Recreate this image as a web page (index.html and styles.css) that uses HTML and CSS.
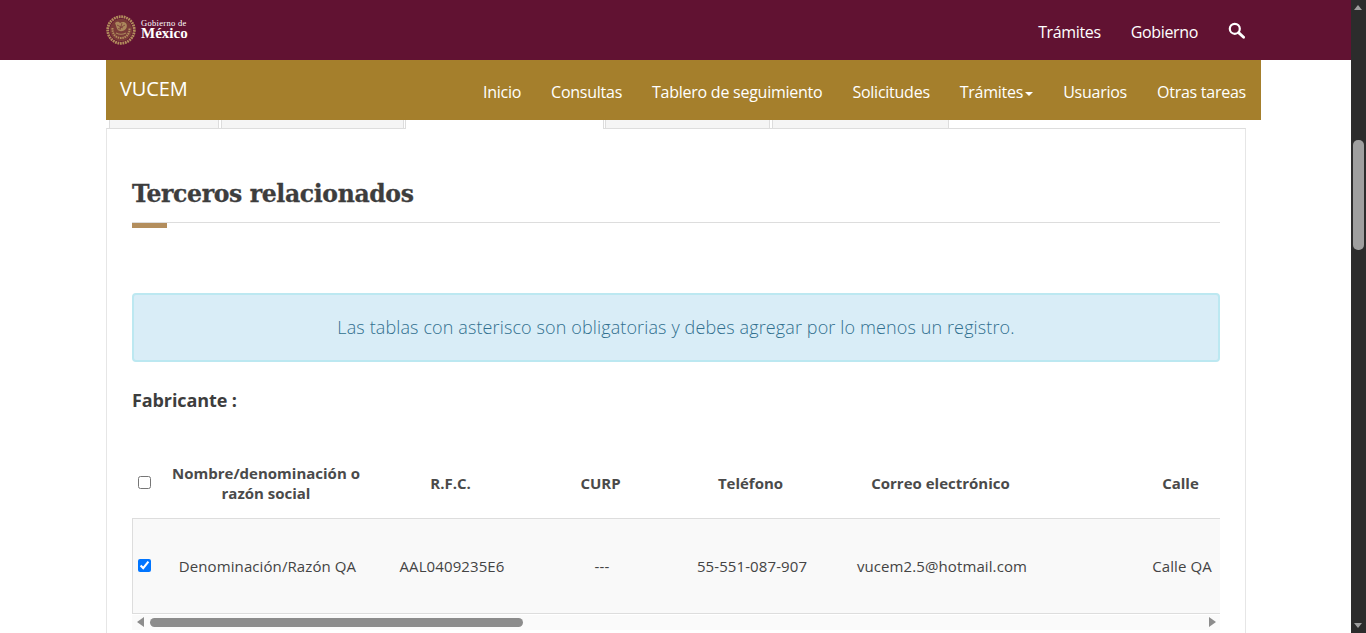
FILE: index.html
```html
<!DOCTYPE html>
<html lang="es">
<head>
    <meta charset="UTF-8">
    <meta name="viewport" content="width=device-width, initial-scale=1.0">
    <title>VUCEM - Terceros relacionados</title>
    <link rel="stylesheet" href="styles.css">
</head>
<body>
    <div class="page">
        <header class="gob-bar">
            <div class="container gob-inner">
                <a class="gob-logo" href="#">
                    <svg class="gob-emblem" width="30" height="30" viewBox="0 0 30 30">
                        <circle cx="15" cy="15" r="13.300" fill="none" stroke="#b38e5d" stroke-width="2.800" stroke-dasharray="1.800 .7"/>
                        <circle cx="15" cy="15" r="11.300" fill="#7a3a38"/>
                        <path d="M6.500 13c-.5 6 3.500 10 8.500 10s9-4 8.500-10" fill="none" stroke="#b38e5d" stroke-width="2" stroke-dasharray="1.500 .8"/>
                        <path d="M9 8c2-2 4-1.500 5 0 2-1.500 5-1.500 6.500 1 1 2.500 0 5-2.500 6.500-2.500 1-5 1-6.500-1-1-1.500-1-3-2.500-6.500z" fill="#ab875c"/>
                        <path d="M11 10l6 3M16 8l-2 7M12 14l7-4" stroke="#7a3a38" stroke-width=".8"/>
                        <path d="M10 18c3 1.500 7 1.500 10 0" fill="none" stroke="#ab875c" stroke-width="1.200"/>
                    </svg>
                    <span class="gob-name">
                        <span class="gob-small">Gobierno de</span>
                        <span class="gob-big">México</span>
                    </span>
                </a>
                <nav class="gob-links">
                    <a href="#">Trámites</a>
                    <a href="#">Gobierno</a>
                    <a href="#" class="gob-search">
                        <svg width="17" height="17" viewBox="0 0 17 17">
                            <circle cx="6.800" cy="6.800" r="5" fill="none" stroke="#fff" stroke-width="2.200"/>
                            <path d="M10.600 10.600l5 4.600" stroke="#fff" stroke-width="2.800" stroke-linecap="round"/>
                        </svg>
                    </a>
                </nav>
            </div>
        </header>

        <div class="container">
            <nav class="sub-nav">
                <a class="brand" href="#">VUCEM</a>
                <div class="sub-links">
                    <a href="#">Inicio</a>
                    <a href="#">Consultas</a>
                    <a href="#">Tablero de seguimiento</a>
                    <a href="#">Solicitudes</a>
                    <a href="#">Trámites<span class="caret"></span></a>
                    <a href="#">Usuarios</a>
                    <a href="#">Otras tareas</a>
                </div>
            </nav>

            <div class="tabs">
                <div class="tab tab-1"></div>
                <div class="tab tab-2"></div>
                <div class="tab tab-active"></div>
                <div class="tab tab-4"></div>
                <div class="tab tab-5"></div>
            </div>

            <section class="panel">
                <h2 class="title">Terceros relacionados</h2>
                <div class="title-rule"></div>

                <div class="alert">Las tablas con asterisco son obligatorias y debes agregar por lo menos un registro.</div>

                <h4 class="section-label">Fabricante :</h4>

                <div class="table-wrap">
                    <table class="data-table">
                        <thead>
                            <tr>
                                <th class="col-check"><input type="checkbox"></th>
                                <th class="col-name">Nombre/denominación o razón social</th>
                                <th class="col-std">R.F.C.</th>
                                <th class="col-std">CURP</th>
                                <th class="col-std">Teléfono</th>
                                <th class="col-mail">Correo electrónico</th>
                                <th class="col-street">Calle</th>
                            </tr>
                        </thead>
                        <tbody>
                            <tr>
                                <td class="col-check"><input type="checkbox" checked></td>
                                <td>Denominación/Razón QA</td>
                                <td>AAL0409235E6</td>
                                <td>---</td>
                                <td>55-551-087-907</td>
                                <td>vucem2.5@hotmail.com</td>
                                <td>Calle QA</td>
                            </tr>
                        </tbody>
                    </table>
                </div>
                <div class="h-scroll">
                    <span class="arrow-left"></span>
                    <span class="h-thumb"></span>
                    <span class="arrow-right"></span>
                </div>
            </section>
        </div>
    </div>

    <div class="v-scroll">
        <span class="arrow-up"></span>
        <span class="v-thumb"></span>
        <span class="arrow-down"></span>
    </div>
</body>
</html>
```

FILE: styles.css
```css
html, body {
    height: 100%;
}

body {
    margin: 0;
    display: flex;
    overflow: hidden;
    background-color: #fff;
    font-family: "Open Sans", Arial, sans-serif;
    color: #333;
}

a {
    color: inherit;
    text-decoration: none;
}

.page {
    flex: 1;
    min-width: 0;
    overflow: hidden;
}

.container {
    width: 1139px;
    margin: 0 auto;
}

/* Barra de gobierno */
.gob-bar {
    height: 60px;
    background-color: #611232;
    color: #fff;
}

.gob-inner {
    display: flex;
    justify-content: space-between;
    align-items: center;
    height: 60px;
}

.gob-logo {
    display: flex;
    align-items: center;
    gap: 5px;
}

.gob-emblem {
    display: block;
}

.gob-name {
    display: flex;
    flex-direction: column;
    font-family: "Liberation Serif", serif;
    line-height: 1;
}

.gob-small {
    font-size: 8.500px;
    letter-spacing: 0.300px;
}

.gob-big {
    font-size: 15px;
    font-weight: bold;
    margin-top: -1px;
}

.gob-links {
    display: flex;
    align-items: center;
    gap: 30px;
    padding-top: 4px;
    font-size: 16px;
    letter-spacing: -0.350px;
}

.gob-search {
    display: flex;
    margin-top: -3px;
}

/* Menu VUCEM */
.sub-nav {
    display: flex;
    justify-content: space-between;
    width: 1155px;
    height: 60px;
    box-sizing: border-box;
    padding: 0 15px 0 14px;
    background-color: #a57f2c;
    color: #fff;
}

.brand {
    font-size: 20px;
    letter-spacing: -0.100px;
    line-height: 58px;
}

.sub-links {
    display: flex;
    gap: 30px;
    font-size: 16px;
    letter-spacing: -0.250px;
    line-height: 64px;
}

.caret {
    display: inline-block;
    margin-left: 2px;
    vertical-align: middle;
    border-top: 4px solid #fff;
    border-left: 4px solid transparent;
    border-right: 4px solid transparent;
}

/* Pestanas, solo asoma la parte de abajo */
.tabs {
    display: flex;
    height: 9px;
    margin-left: 3px;
}

.tab {
    box-sizing: border-box;
    background-color: #f5f5f5;
    border: 1px solid #ddd;
    border-top: none;
    margin-right: 2px;
}

.tab-1 {
    width: 110px;
}

.tab-2 {
    width: 183px;
    margin-right: 1px;
}

.tab-active {
    width: 199px;
    margin-right: 1px;
    background-color: #fff;
    border-bottom: none;
}

.tab-4 {
    width: 165px;
}

.tab-5 {
    width: 177px;
}

.panel {
    width: 1140px;
    box-sizing: border-box;
    padding: 0 25px;
    height: 520px;
    border: 1px solid #e6e6e6;
    border-top: 1px solid #ddd;
    margin-top: -1px;
}

.title {
    margin: 0;
    padding-top: 45px;
    font-family: "DejaVu Serif", serif;
    font-size: 23.500px;
    letter-spacing: -0.350px;
    -webkit-text-stroke: 0.300px #3d3d3d;
    line-height: 40px;
    font-weight: bold;
    color: #3d3d3d;
}

.title-rule {
    position: relative;
    height: 1px;
    margin-top: 8px;
    background-color: #ddd;
}

/* Barrita dorada sobre la linea */
.title-rule::after {
    content: "";
    position: absolute;
    left: 0;
    top: 1px;
    width: 35px;
    height: 5px;
    background-color: #b38e5d;
}

.alert {
    margin-top: 70px;
    height: 69px;
    box-sizing: border-box;
    border: 2px solid #bce8f1;
    border-radius: 4px;
    background-color: #d9edf7;
    color: #31708f;
    font-size: 18px;
    font-weight: 300;
    letter-spacing: 0.120px;
    line-height: 65px;
    text-align: center;
}

.section-label {
    margin: 26px 0 0;
    font-size: 18px;
    font-weight: 700;
    letter-spacing: -0.100px;
    line-height: 24px;
    color: #3d3d3d;
}

.table-wrap {
    margin-top: 36px;
    overflow: hidden;
}

.data-table {
    width: 1173px;
    table-layout: fixed;
    border-collapse: collapse;
    font-size: 15px;
}

.data-table th {
    height: 70px;
    padding: 0 8px;
    box-sizing: border-box;
    font-weight: 700;
    line-height: 20px;
    text-align: center;
    color: #4a4a4a;
}

.data-table td {
    height: 94px;
    padding: 0 0 0 3px;
    letter-spacing: 0.100px;
    text-align: center;
    background-color: #f9f9f9;
    border-top: 1px solid #ddd;
    border-bottom: 1px solid #ddd;
    color: #444;
}

.data-table tbody tr td:first-child {
    border-left: 1px solid #ddd;
}

.data-table input {
    display: block;
    margin: 0 0 0 5px;
}

.col-check {
    width: 24px;
    padding: 0 !important;
}

.col-name {
    width: 219px;
}

.col-std {
    width: 150px;
}

.col-mail {
    width: 230px;
}

.col-street {
    width: 250px;
}

/* Scroll horizontal de la tabla */
.h-scroll {
    display: flex;
    align-items: center;
    height: 15px;
    margin-top: 1px;
    background-color: #fafafa;
}

.h-thumb {
    width: 373px;
    height: 9px;
    margin-left: 6px;
    border-radius: 5px;
    background-color: #8c8c8c;
}

.arrow-left {
    margin-left: 5px;
    border-right: 7px solid #8c8c8c;
    border-top: 5px solid transparent;
    border-bottom: 5px solid transparent;
}

.arrow-right {
    margin-left: auto;
    margin-right: 4px;
    border-left: 7px solid #8c8c8c;
    border-top: 5px solid transparent;
    border-bottom: 5px solid transparent;
}

/* Scroll de la ventana */
.v-scroll {
    position: relative;
    flex: 0 0 15px;
    background-color: #2c2c2c;
}

.v-thumb {
    position: absolute;
    left: 2px;
    top: 140px;
    width: 11px;
    height: 110px;
    border-radius: 5px;
    background-color: #9f9f9f;
}

.arrow-up,
.arrow-down {
    position: absolute;
    left: 3px;
    border-left: 4.500px solid transparent;
    border-right: 4.500px solid transparent;
}

.arrow-up {
    top: 5px;
    border-bottom: 5px solid #9f9f9f;
}

.arrow-down {
    bottom: 5px;
    border-top: 5px solid #9f9f9f;
}
```
